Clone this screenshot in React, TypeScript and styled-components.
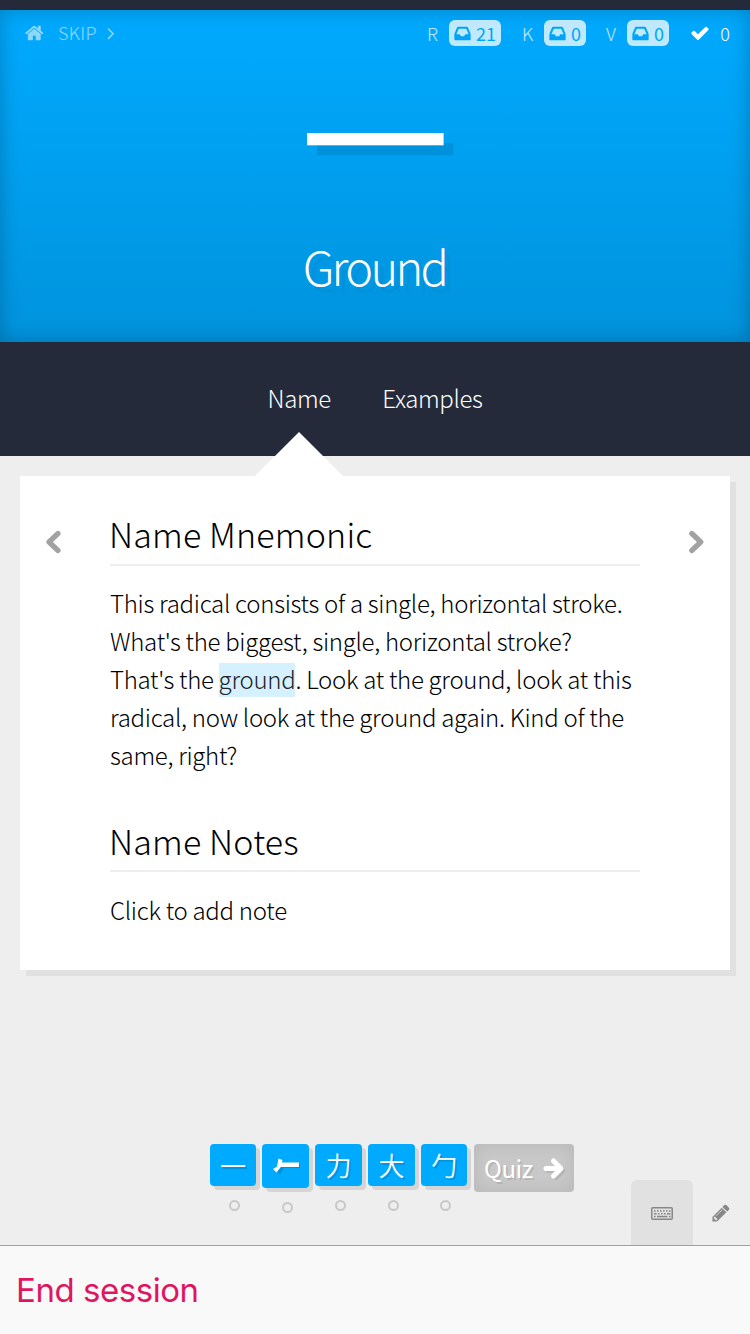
import React from "react";
import styled, { createGlobalStyle, css } from "styled-components";

const GlobalStyle = createGlobalStyle`
  * { box-sizing: border-box; }
  html, body { margin: 0; padding: 0; }
  body {
    width: 750px;
    background: #eeeeee;
    font-family: "Noto Sans CJK JP", "Open Sans", sans-serif;
    font-weight: 300;
    color: #000;
  }
  h2, p { margin: 0; font-weight: 300; }
`;

const Page = styled.div`
  display: flex;
  flex-direction: column;
  width: 750px;
  height: 1334px;
  overflow: hidden;
  background: #eeeeee;
`;

const StatusStrip = styled.div`
  flex: none;
  height: 10px;
  background: #252a3a;
`;

const Hero = styled.header`
  flex: none;
  display: flex;
  flex-direction: column;
  height: 332px;
  color: #fff;
  background: linear-gradient(to bottom, #00aaff, #0093dd);
  box-shadow: inset 0 0 20px rgba(0, 0, 0, 0.24);
`;

const TopBar = styled.div`
  flex: none;
  display: flex;
  align-items: center;
  height: 46px;
  padding: 0 20px 0 25px;
  font-size: 18px;
  line-height: 26px;
`;

const SkipLink = styled.div`
  display: flex;
  align-items: center;
  height: 26px;
  opacity: 0.55;
`;

const SkipLabel = styled.span`
  margin: 0 4px 0 13px;
  letter-spacing: 0.3px;
  transform: translateY(-1px);
`;

const Stats = styled.div`
  display: flex;
  align-items: center;
  margin: -1px 0 0 auto;
`;

const Stat = styled.div<{ $width: number; $gap: number }>`
  display: flex;
  align-items: center;
  justify-content: space-between;
  width: ${(p) => p.$width}px;
  margin-right: ${(p) => p.$gap}px;
  opacity: 0.75;
`;

const Badge = styled.span`
  display: flex;
  align-items: center;
  gap: 4px;
  height: 26px;
  margin-top: 1px;
  padding: 0 5px 0 4px;
  border-radius: 6px;
  background: #fff;
  color: #00a5f8;
  font-weight: 400;
  line-height: 24px;
`;

const Done = styled.div`
  display: flex;
  align-items: center;
  justify-content: space-between;
  width: 40px;
`;

const Character = styled.div`
  flex: none;
  height: 150px;
  margin-top: 1px;
  text-align: center;
  font-size: 149px;
  line-height: 150px;
  font-weight: 400;
  text-shadow: 10px 10px 0 rgba(0, 70, 120, 0.17);
`;

const Meaning = styled.div`
  margin-top: 25px;
  padding-left: 1px;
  text-align: center;
  font-size: 47px;
  line-height: 68px;
  font-weight: 200;
  letter-spacing: -2.7px;
  text-indent: -2px;
  text-shadow: 6px 6px 0 rgba(0, 60, 110, 0.07);
`;

const Nav = styled.nav`
  flex: none;
  display: flex;
  justify-content: center;
  gap: 51.5px;
  height: 114px;
  background: #252a3a;
  color: #fff;
  font-size: 24px;
  line-height: 112px;
  letter-spacing: -0.4px;
`;

const NavItem = styled.div<{ $active?: boolean }>`
  position: relative;
  ${(p) =>
    p.$active &&
    css`
      &::after {
        content: "";
        position: absolute;
        left: 50%;
        top: 90px;
        margin-left: -44px;
        border: 44px solid transparent;
        border-top: 0;
        border-bottom-color: #fff;
      }
    `}
`;

const Card = styled.main`
  flex: none;
  display: flex;
  justify-content: space-between;
  width: 710px;
  height: 494px;
  margin: 20px 0 0 20px;
  padding: 0 26px;
  background: #fff;
  box-shadow: 6px 6px 0 #e1e1e1;
`;

const Pager = styled.div`
  flex: none;
  width: 16px;
  margin-top: 54px;
`;

const Content = styled.div`
  width: 530px;
  padding-top: 30px;
`;

const Heading = styled.h2<{ $top?: number }>`
  height: 60px;
  margin-top: ${(p) => p.$top ?? 0}px;
  border-bottom: 2px solid #eeeeee;
  font-size: 34px;
  line-height: ${(p) => (p.$top ? 58 : 56)}px;
  letter-spacing: 0.18px;
  text-indent: -1px;
  white-space: nowrap;
`;

const Text = styled.p<{ $top?: number }>`
  margin-top: ${(p) => p.$top ?? 18}px;
  font-size: 24px;
  line-height: 38px;
  letter-spacing: -0.29px;
  white-space: nowrap;
`;

const Highlight = styled.span`
  padding: 2px 0 1px;
  background: linear-gradient(#d5f1ff, #d5f1ff) center calc(60% + 2px) / 100% 34px no-repeat;
  color: #222;
`;

const Lessons = styled.div`
  flex: none;
  display: flex;
  align-items: flex-start;
  height: 101px;
  margin-top: 174px;
  padding-left: 210px;
`;

const LessonItem = styled.div<{ $edge?: boolean; $last?: boolean }>`
  display: flex;
  flex-direction: column;
  align-items: center;
  width: ${(p) => (p.$edge ? 46 : 47)}px;
  margin-right: ${(p) => (p.$last ? 7 : 6)}px;
`;

const Tile = styled.div<{ $image?: boolean }>`
  display: flex;
  align-items: center;
  justify-content: center;
  width: 100%;
  height: ${(p) => (p.$image ? 44 : 42)}px;
  border-radius: 4px;
  background: #00aaff;
  box-shadow: 4px 4px 0 #d5d5d5;
  color: #fff;
  font-size: 26px;
  font-weight: 350;
  line-height: 42px;
  text-shadow: 2px 2px 0 rgba(0, 0, 0, 0.15);
`;

const Dot = styled.span`
  width: 11px;
  height: 11px;
  margin: 14px 0 0 3px;
  border: 2px solid #c8c8c8;
  border-radius: 50%;
`;

const QuizButton = styled.div`
  display: flex;
  align-items: center;
  justify-content: space-between;
  width: 100px;
  height: 48px;
  padding: 0 9px 0 10px;
  border-radius: 4px;
  background: #c8c8c8;
  box-shadow: inset 0 0 16px rgba(0, 0, 0, 0.09);
  color: #fff;
  font-size: 24px;
  line-height: 46px;
  font-weight: 400;
  letter-spacing: -0.4px;
  text-shadow: 2px 2px 0 rgba(0, 0, 0, 0.1);
`;

const Tools = styled.div`
  display: flex;
  align-self: flex-end;
  height: 65px;
  margin-left: 57px;
`;

const Tool = styled.div<{ $active?: boolean }>`
  display: flex;
  align-items: center;
  justify-content: center;
  width: ${(p) => (p.$active ? 62 : 56)}px;
  padding-top: 1px;
  border-radius: 6px 6px 0 0;
  background: ${(p) => (p.$active ? "#e1e1e1" : "transparent")};
  color: #888;
`;

const Footer = styled.footer`
  flex: 1;
  padding-left: 16px;
  border-top: 1px solid #a0a0a0;
  background: #f9f9f9;
  color: #e0155f;
  font-family: Inter, sans-serif;
  font-size: 33px;
  font-weight: 400;
  line-height: 88px;
  letter-spacing: -0.45px;
`;

const Svg = styled.svg`
  display: block;
  flex: none;
`;

const paths = {
  home: "M1408 992v480q0 26-19 45t-45 19h-384v-384h-256v384h-384q-26 0-45-19t-19-45v-480q0-1 .5-3t.5-3l575-474 575 474q1 2 1 6zm223-69l-62 74q-8 9-21 11h-3q-13 0-21-7l-692-577-692 577q-12 8-24 7-13-2-21-11l-62-74q-8-10-7-23.5t11-21.5l719-599q32-26 76-26t76 26l244 204v-195q0-14 9-23t23-9h192q14 0 23 9t9 23v408l219 182q10 8 11 21.5t-7 23.5z",
  inbox: "M1151 960h316q-1-3-2.5-8t-2.5-8l-212-496h-708l-212 496q-1 2-2.5 8t-2.5 8h316l95 192h320zm513 30v482q0 26-19 45t-45 19h-1408q-26 0-45-19t-19-45v-482q0-62 25-123l238-552q10-25 36.5-42t52.5-17h832q26 0 52.5 17t36.5 42l238 552q25 61 25 123z",
  angle: "M1171 960q0 13-10 23l-466 466q-10 10-23 10t-23-10l-50-50q-10-10-10-23t10-23l393-393-393-393q-10-10-10-23t10-23l50-50q10-10 23-10t23 10l466 466q10 10 10 23z",
  check: "M1671 566q0 40-28 68l-724 724-136 136q-28 28-68 28t-68-28l-136-136-362-362q-28-28-28-68t28-68l136-136q28-28 68-28t68 28l294 295 656-657q28-28 68-28t68 28l136 136q28 28 28 68z",
  pencil: "M491 1536l91-91-235-235-91 91v107h128v128h107zm523-928q0-22-22-22-10 0-17 7l-542 542q-7 7-7 17 0 22 22 22 10 0 17-7l542-542q7-7 7-17zm-54-192l416 416-832 832h-416v-416zm683 96q0 53-37 90l-166 166-416-416 166-165q36-38 90-38 53 0 91 38l235 234q37 39 37 91z",
};

function Icon({ name, size }: { name: keyof typeof paths; size: number }) {
  return (
    <Svg width={size} height={size} viewBox="0 0 1792 1792" fill="currentColor">
      <path d={paths[name]} />
    </Svg>
  );
}

function Chevron({ right }: { right?: boolean }) {
  return (
    <Svg width="16" height="24" viewBox="0 0 16 24" fill="none" stroke="#a2a2a2" strokeWidth="5.2" strokeLinecap="round" strokeLinejoin="round">
      <path d={right ? "M3.8 3.5L12.8 12L3.8 20.5" : "M12 3.5L3 12L12 20.5"} />
    </Svg>
  );
}

function Gun() {
  return (
    <Svg width="28" height="18" viewBox="0 0 28 18">
      <path d="M11.5 7H28V11H12L8 17L5 14.5L9.500 5.500Z" fill="#0091da" />
      <path d="M6.500 1.500L10.500 3L9.800 5.500H27V10H8.800L4.500 15.500L1 12L5 9.500Z" fill="#fff" />
    </Svg>
  );
}

function QuizArrow() {
  return (
    <Svg width="22" height="24" viewBox="0 0 22 24">
      <g fill="none" strokeWidth="5" strokeLinecap="round" strokeLinejoin="round">
        <path d="M5 14.500H19M12.500 7L20 14.500L12.500 22" stroke="#b5b5b5" />
        <path d="M3 12.500H17M10.500 5L18 12.500L10.500 20" stroke="#fff" />
      </g>
    </Svg>
  );
}

function Keyboard() {
  const keys: [number, number, number][] = [
    [3, 3.2, 1.6], [6, 3.2, 1.6], [9, 3.2, 1.6], [12, 3.2, 1.6], [15, 3.2, 1.6], [18, 3.2, 1.6],
    [3, 6, 2.6], [7, 6, 1.6], [10, 6, 1.6], [13, 6, 1.6], [16, 6, 3.5],
    [3, 8.8, 1.6], [6, 8.8, 10.5], [18, 8.8, 1.6],
  ];
  return (
    <Svg width="22" height="13" viewBox="0 0 22 13">
      <rect x="0.75" y="0.75" width="20.5" height="11.5" rx="1" fill="none" stroke="currentColor" strokeWidth="1.5" />
      {keys.map(([x, y, w]) => (
        <rect key={`${x}-${y}`} x={x} y={y} width={w} height="1.5" fill="currentColor" />
      ))}
    </Svg>
  );
}

const stats = [
  { label: "R", count: 21, width: 74, gap: 21 },
  { label: "K", count: 0, width: 64, gap: 20 },
  { label: "V", count: 0, width: 63, gap: 21 },
];

const lessons = ["一", null, "力", "大", "勹"];

export default function App() {
  return (
    <Page>
      <GlobalStyle />
      <StatusStrip />
      <Hero>
        <TopBar>
          <SkipLink>
            <Icon name="home" size={20} />
            <SkipLabel>SKIP</SkipLabel>
            <Icon name="angle" size={20} />
          </SkipLink>
          <Stats>
            {stats.map((s) => (
              <Stat key={s.label} $width={s.width} $gap={s.gap}>
                {s.label}
                <Badge>
                  <Icon name="inbox" size={19} />
                  {s.count}
                </Badge>
              </Stat>
            ))}
            <Done>
              <Icon name="check" size={20} />
              <span>0</span>
            </Done>
          </Stats>
        </TopBar>
        <Character>一</Character>
        <Meaning>Ground</Meaning>
      </Hero>
      <Nav>
        <NavItem $active>Name</NavItem>
        <NavItem>Examples</NavItem>
      </Nav>
      <Card>
        <Pager><Chevron /></Pager>
        <Content>
          <Heading>Name Mnemonic</Heading>
          <Text>
            This radical consists of a single, horizontal stroke.<br />
            What's the biggest, single, horizontal stroke?<br />
            That's the <Highlight>ground</Highlight>. Look at the ground, look at this<br />
            radical, now look at the ground again. Kind of the<br />
            same, right?
          </Text>
          <Heading $top={38}>Name Notes</Heading>
          <Text $top={19}>Click to add note</Text>
        </Content>
        <Pager><Chevron right /></Pager>
      </Card>
      <Lessons>
        {lessons.map((c, i) => (
          <LessonItem key={i} $edge={i === 0 || i === lessons.length - 1} $last={i === lessons.length - 1}>
            <Tile $image={c === null}>{c ?? <Gun />}</Tile>
            <Dot />
          </LessonItem>
        ))}
        <QuizButton>
          Quiz
          <QuizArrow />
        </QuizButton>
        <Tools>
          <Tool $active><Keyboard /></Tool>
          <Tool><Icon name="pencil" size={20} /></Tool>
        </Tools>
      </Lessons>
      <Footer>End session</Footer>
    </Page>
  );
}
